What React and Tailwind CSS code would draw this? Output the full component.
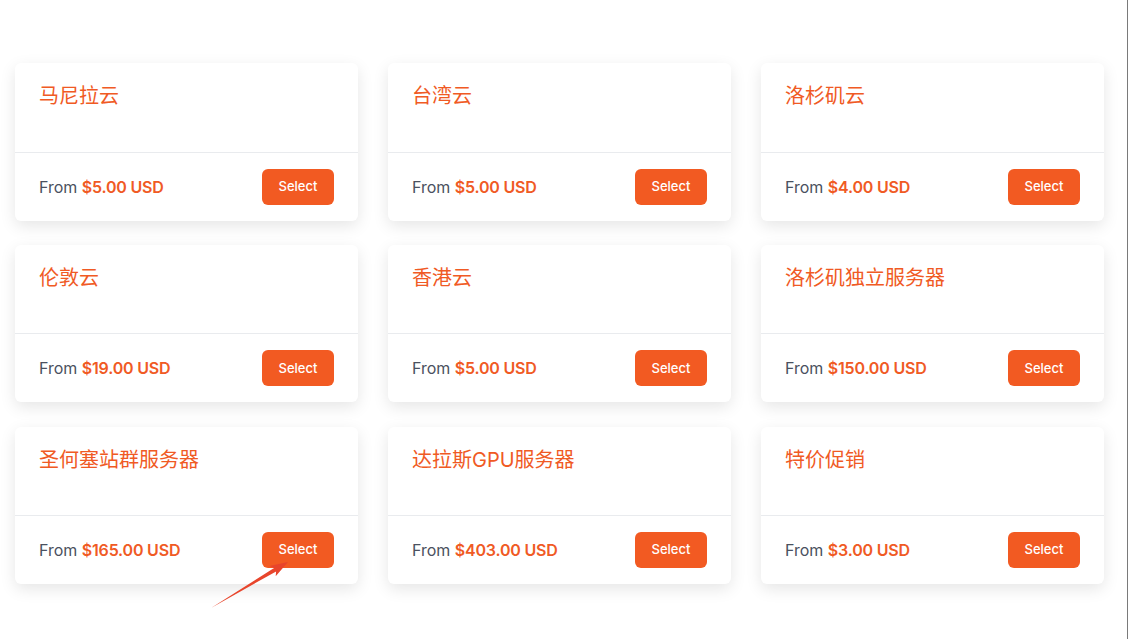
const products = [
  { name: '马尼拉云', price: '$5.00 USD' },
  { name: '台湾云', price: '$5.00 USD' },
  { name: '洛杉矶云', price: '$4.00 USD' },
  { name: '伦敦云', price: '$19.00 USD' },
  { name: '香港云', price: '$5.00 USD' },
  { name: '洛杉矶独立服务器', price: '$150.00 USD' },
  { name: '圣何塞站群服务器', price: '$165.00 USD' },
  { name: '达拉斯GPU服务器', price: '$403.00 USD' },
  { name: '特价促销', price: '$3.00 USD' },
];

const ProductCard = ({ name, price }) => (
  <div className="bg-white rounded-md shadow-[0_5px_16px_rgba(0,0,0,0.1)] flex flex-col">
    <div className="h-[89.5px] px-6 pt-[19px] border-b border-[#e9ebee]">
      <h3 className="text-[20px] leading-7 text-[#f05a24]">{name}</h3>
    </div>
    <div className="h-[68px] px-6 flex items-center justify-between">
      <p className="text-[16px] text-[#4a5160]">
        From <span className="font-semibold tracking-[-0.2px] text-[#f05a24]">{price}</span>
      </p>
      <button className="w-[72px] h-9 rounded-md bg-[#f25a22] text-white text-[13px] font-medium">
        Select
      </button>
    </div>
  </div>
);

export default function App() {
  return (
    <div
      className="relative w-[1128px] h-[639px] bg-white border-r border-[#7a7a7a] overflow-hidden"
      style={{ fontFamily: 'Inter, "Noto Sans CJK SC", sans-serif' }}
    >
      <div className="pt-[63px] pl-[15px] pr-[23px] grid grid-cols-3 gap-x-[30px] gap-y-[24.25px]">
        {products.map((p) => (
          <ProductCard key={p.name} {...p} />
        ))}
      </div>

      {/* annotation arrow */}
      <svg className="absolute left-0 top-0 pointer-events-none" width="1128" height="639">
        <polygon
          points="211,608 274.1,568 269.5,566.1 288,562 275.7,576.3 276.1,571.4"
          fill="#e8452c"
        />
      </svg>
    </div>
  );
}
